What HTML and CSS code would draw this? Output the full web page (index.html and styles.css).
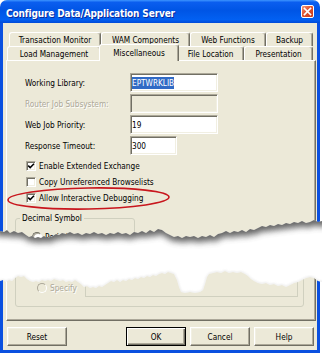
FILE: index.html
```html
<!DOCTYPE html>
<html lang="en">
<head>
    <meta charset="UTF-8">
    <title>Configure Data/Application Server</title>
    <link rel="stylesheet" href="styles.css">
</head>
<body>
<div class="sheet">
    <div class="window">
        <div class="titlebar">
            <span class="title">Configure Data/Application Server</span>
            <span class="close">
                <svg width="9" height="9" viewBox="0 0 9 9"><path d="M1.5 1.5 L7.5 7.5 M7.5 1.5 L1.5 7.5" stroke="#fff" stroke-width="1.7" stroke-linecap="square"/></svg>
            </span>
        </div>
        <div class="client">
            <div class="tabs">
                <div class="tab-row back">
                    <div class="tab w-trans">Transaction Monitor</div>
                    <div class="tab w-wam">WAM Components</div>
                    <div class="tab w-web">Web Functions</div>
                    <div class="tab w-backup">Backup</div>
                </div>
                <div class="tab-row front">
                    <div class="tab w-load">Load Management</div>
                    <div class="tab w-misc active">Miscellaneous</div>
                    <div class="tab w-file">File Location</div>
                    <div class="tab w-pres">Presentation</div>
                </div>
            </div>

            <div class="panel">
                <div class="fields">
                    <div class="field">
                        <label>Working Library:</label>
                        <span class="input"><span class="sel">EPTWRKLIB</span></span>
                    </div>
                    <div class="field">
                        <label class="off">Router Job Subsystem:</label>
                        <span class="input off"></span>
                    </div>
                    <div class="field">
                        <label>Web Job Priority:</label>
                        <span class="input">19</span>
                    </div>
                    <div class="field">
                        <label>Response Timeout:</label>
                        <span class="input short">300</span>
                    </div>
                </div>

                <div class="checks">
                    <div class="check">
                        <span class="box"><svg width="8" height="8" viewBox="0 0 8 8"><path d="M1.2 3.6 L3.2 5.6 L7 1.8" fill="none" stroke="#000" stroke-width="1.5"/></svg></span>
                        Enable Extended Exchange
                    </div>
                    <div class="check">
                        <span class="box"></span>
                        Copy Unreferenced Browselists
                    </div>
                    <div class="check">
                        <span class="box"><svg width="8" height="8" viewBox="0 0 8 8"><path d="M1.2 3.6 L3.2 5.6 L7 1.8" fill="none" stroke="#000" stroke-width="1.5"/></svg></span>
                        Allow Interactive Debugging
                    </div>
                </div>

                <fieldset class="group decimal">
                    <legend>Decimal Symbol</legend>
                    <div class="opt"><span class="radio"></span>Period</div>
                </fieldset>

                <div class="group lower">
                    <div class="opt off"><span class="radio off"></span>Specify</div>
                    <div class="specbox"></div>
                </div>
            </div>

            <div class="buttons">
                <span class="btn">Reset</span>
                <span class="btn default">OK</span>
                <span class="btn">Cancel</span>
                <span class="btn">Help</span>
            </div>
        </div>
    </div>

    <svg class="overlay" width="322" height="354" viewBox="0 0 322 354">
        <defs>
            <path id="gapPath" d="M-5,231 0,231 4,232 7,230 10,233 14,231 18,233 22,232 26,235 29,237 32,236 35,238 38,237 41,238 44,236 47,238 50,237 53,236 56,234 59,235 62,233 66,234 70,232 74,234 78,233 82,235 86,233 90,234 94,232 98,234 102,233 106,235 110,233 114,234 118,232 122,234 126,233 130,235 134,232 138,233 142,231 146,233 150,230 154,232 158,229 162,230 166,233 170,235 174,237 178,236 182,238 186,236 190,237 194,236 198,238 202,236 206,237 210,235 214,237 218,234 222,233 226,231 230,233 234,231 238,232 242,230 246,232 250,229 254,230 258,228 262,226 266,227 270,225 274,226 278,224 282,225 286,223 290,224 294,222 298,223 302,221 306,223 310,222 314,220 318,222 322,221 327,221 L327,282 322,282 318,281 314,278 310,277 306,278 302,280 298,282 294,283 290,285 286,287 282,285 278,286 274,284 270,285 266,283 262,284 258,283 254,281 251,279 248,276 245,274 241,272 237,273 233,272 229,273 225,271 221,273 217,272 213,273 209,274 207,277 205,284 203,290 200,292 195,293 190,292 185,293 181,292 179,287 177,280 174,274 171,273 168,272 165,274 162,273 159,274 156,276 153,275 150,277 147,276 144,278 141,277 138,279 135,278 132,280 129,279 126,281 123,280 120,282 117,280 114,282 111,281 108,283 105,285 102,287 99,286 96,288 93,287 90,288 87,286 84,287 81,284 78,282 75,280 72,282 69,281 66,282 63,280 60,281 57,280 54,279 51,281 48,280 45,281 42,280 39,282 36,281 33,282 30,281 27,279 24,276 21,277 18,276 15,278 12,281 9,280 6,282 3,280 0,281 -5,281 Z"/>
            <clipPath id="gapClip"><use href="#gapPath"/></clipPath>
            <filter id="soft" x="-10%" y="-60%" width="120%" height="220%"><feGaussianBlur stdDeviation="3"/></filter>
            <filter id="fine" x="-10%" y="-60%" width="120%" height="220%"><feGaussianBlur stdDeviation="0.8"/></filter>
        </defs>
        <use href="#gapPath" class="paper"/>
        <g clip-path="url(#gapClip)">
            <path class="shade" filter="url(#soft)" transform="translate(1,5)" d="M-5,231 0,231 4,232 7,230 10,233 14,231 18,233 22,232 26,235 29,237 32,236 35,238 38,237 41,238 44,236 47,238 50,237 53,236 56,234 59,235 62,233 66,234 70,232 74,234 78,233 82,235 86,233 90,234 94,232 98,234 102,233 106,235 110,233 114,234 118,232 122,234 126,233 130,235 134,232 138,233 142,231 146,233 150,230 154,232 158,229 162,230 166,233 170,235 174,237 178,236 182,238 186,236 190,237 194,236 198,238 202,236 206,237 210,235 214,237 218,234 222,233 226,231 230,233 234,231 238,232 242,230 246,232 250,229 254,230 258,228 262,226 266,227 270,225 274,226 278,224 282,225 286,223 290,224 294,222 298,223 302,221 306,223 310,222 314,220 318,222 322,221 327,221 L327,150 -5,150 Z"/>
            <path class="rim" filter="url(#fine)" d="M327,282 322,282 318,281 314,278 310,277 306,278 302,280 298,282 294,283 290,285 286,287 282,285 278,286 274,284 270,285 266,283 262,284 258,283 254,281 251,279 248,276 245,274 241,272 237,273 233,272 229,273 225,271 221,273 217,272 213,273 209,274 207,277 205,284 203,290 200,292 195,293 190,292 185,293 181,292 179,287 177,280 174,274 171,273 168,272 165,274 162,273 159,274 156,276 153,275 150,277 147,276 144,278 141,277 138,279 135,278 132,280 129,279 126,281 123,280 120,282 117,280 114,282 111,281 108,283 105,285 102,287 99,286 96,288 93,287 90,288 87,286 84,287 81,284 78,282 75,280 72,282 69,281 66,282 63,280 60,281 57,280 54,279 51,281 48,280 45,281 42,280 39,282 36,281 33,282 30,281 27,279 24,276 21,277 18,276 15,278 12,281 9,280 6,282 3,280 0,281 -5,281"/>
        </g>
        <ellipse class="ring" cx="88.5" cy="198.5" rx="80.5" ry="10.5" transform="rotate(-1 88.5 198.5)"/>
    </svg>
</div>
</body>
</html>
```

FILE: styles.css
```css
* { box-sizing: border-box; }
body {
    margin: 0;
    background: #fff;
    font-family: "DejaVu Sans Condensed", "DejaVu Sans", sans-serif;
    font-size: 8.2px;
    color: #000;
}
.sheet {
    position: relative;
    width: 322px;
    height: 354px;
}
.window {
    width: 320px;
    height: 353px;
    display: flex;
    flex-direction: column;
    background: #ECE9D8;
    border-radius: 7px 7px 0 0;
}

/* title bar */
.titlebar {
    height: 23px;
    display: flex;
    align-items: center;
    justify-content: space-between;
    padding: 0 6px 0 6px;
    border-radius: 7px 7px 0 0;
    background: linear-gradient(180deg, #3D95FF 0%, #0B5EEF 10%, #0055E5 45%, #0260F2 85%, #004AD8 100%);
}
.title {
    margin-top: 3px;
    color: #fff;
    font-size: 10px;
    font-weight: bold;
    letter-spacing: -0.15px;
    text-shadow: 1px 1px 0 #0A2A9A;
}
.close {
    width: 13px;
    height: 13px;
    border: 1px solid #fff;
    border-radius: 2px;
    background: linear-gradient(135deg, #F29A7E 0%, #E0532F 45%, #C33A1C 100%);
    display: flex;
    align-items: center;
    justify-content: center;
}

.client {
    flex: 1;
    border: 3px solid #0A50E0;
    border-top: 0;
    padding: 9px 1px 0 3px;
}

/* tabs */
.tabs {
    height: 28px;
    display: flex;
    flex-direction: column;
}
.tab-row {
    display: flex;
    align-items: flex-start;
    height: 14px;
}
.tab-row.back { padding-left: 3px; }
.tab-row.front { padding-left: 1px; }
.tab {
    height: 14px;
    border: 1px solid;
    border-bottom: 0;
    border-color: #fff #716F64 transparent #fff;
    box-shadow: inset -1px 0 #ACA899;
    border-radius: 3px 3px 0 0;
    display: flex;
    align-items: center;
    justify-content: center;
    white-space: nowrap;
}
.tab.active {
    position: relative;
    z-index: 1;
    height: 17px;
    margin: -2px -2px -1px;
    background: #ECE9D8;
    padding-bottom: 1px;
}
.w-trans { width: 92px; }
.w-wam { width: 89px; }
.w-web { width: 76px; }
.w-backup { width: 47px; }
.w-load { width: 94px; }
.w-misc { width: 76px; }
.w-misc.active { width: 80px; }
.w-file { width: 67px; }
.w-pres { width: 69px; }

/* page */
.panel {
    height: 261px;
    display: flex;
    flex-direction: column;
    align-items: flex-start;
    border: 1px solid;
    border-color: #fff #716F64 #716F64 #fff;
    box-shadow: inset -1px -1px #ACA899;
    padding: 12px 0 13px 8px;
}
.fields {
    margin-left: 10px;
    display: flex;
    flex-direction: column;
    gap: 2px;
}
.field {
    display: flex;
    align-items: center;
    height: 19px;
}
.field label { width: 105px; }
.field label.off,
.opt.off {
    color: #ACA899;
    text-shadow: 1px 1px 0 #fff;
}
.input {
    width: 88px;
    height: 19px;
    display: flex;
    align-items: center;
    padding-left: 1px;
    background: #fff;
    border: 1px solid;
    border-color: #ACA899 #fff #fff #ACA899;
    box-shadow: inset 1px 1px #716F64, inset -1px -1px #F1EFE2;
}
.input.short { width: 47px; }
.input.off { background: #ECE9D8; }
.sel {
    background: #316AC5;
    color: #fff;
    padding: 1px 0;
}

.checks { margin: 3px 0 0 11px; }
.check {
    height: 16px;
    display: flex;
    align-items: center;
}
.box {
    width: 10px;
    height: 10px;
    margin-right: 3px;
    background: #fff;
    border: 1px solid;
    border-color: #ACA899 #fff #fff #ACA899;
    box-shadow: inset 1px 1px #716F64, inset -1px -1px #F1EFE2;
    display: flex;
}

.group {
    border: 1px solid #D0D0BF;
    border-radius: 3px;
}
.decimal {
    margin: 6.5px 0 0;
    width: 120px;
    height: 44px;
    padding: 0 4px;
}
.decimal legend {
    padding: 0 2px;
    line-height: 11px;
}
.opt {
    height: 12px;
    display: flex;
    align-items: center;
}
.decimal .opt { margin: 7.5px 0 0 12px; }
.radio {
    width: 10px;
    height: 10px;
    margin-right: 3px;
    border-radius: 50%;
    border: 1px solid;
    border-color: #716F64 #fff #fff #716F64;
    background: #fff;
    box-shadow: inset 1px 1px #ACA899;
}
.radio.off {
    border-color: #ACA899 #fff #fff #ACA899;
    background: #ECE9D8;
    box-shadow: none;
}
.lower {
    margin-top: auto;
    width: 289px;
    height: 53px;
    display: flex;
    align-items: flex-end;
    padding: 0 0 9px 21px;
}
.lower .opt { margin-bottom: 3px; }
.specbox {
    margin-left: auto;
    margin-right: 5px;
    width: 213px;
    height: 30px;
    border: 1px solid #D0D0BF;
    border-top: 0;
}

/* buttons */
.buttons {
    display: flex;
    gap: 4px;
    margin: 6px 2px 0 1px;
}
.btn {
    width: 60px;
    height: 19px;
    display: flex;
    align-items: center;
    justify-content: center;
    border: 1px solid;
    border-color: #fff #716F64 #716F64 #fff;
    box-shadow: inset -1px -1px #ACA899, inset 1px 1px #F1EFE2;
}
.btn.default {
    margin-left: auto;
    border-color: #000;
    box-shadow: inset 1px 1px #fff, inset -1px -1px #716F64, inset -2px -2px #ACA899;
}

/* torn paper and highlight ring */
.overlay {
    position: absolute;
    left: 0;
    top: 0;
}
.paper { fill: #fff; }
.shade { fill: #4a4a4a; opacity: 0.85; }
.rim { fill: none; stroke: #d4d4d4; stroke-width: 1; }
.ring {
    fill: none;
    stroke: #C8161D;
    stroke-width: 1.6;
}
```
